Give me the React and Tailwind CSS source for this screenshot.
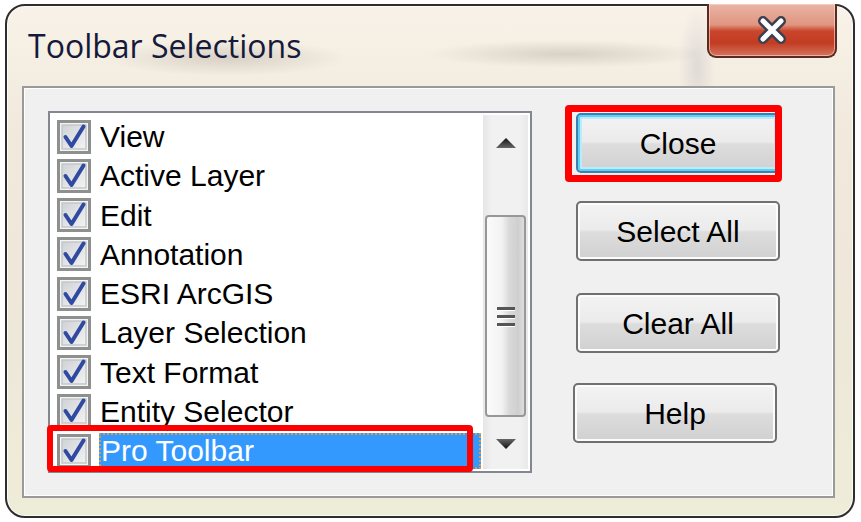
import React from 'react';

const items = [
  'View',
  'Active Layer',
  'Edit',
  'Annotation',
  'ESRI ArcGIS',
  'Layer Selection',
  'Text Format',
  'Entity Selector',
  'Pro Toolbar',
];

function CheckBox() {
  return (
    <svg width="34" height="34" viewBox="0 0 34 34" className="shrink-0">
      <defs>
        <linearGradient id="cbFill" x1="0" y1="0" x2="1" y2="1">
          <stop offset="0" stopColor="#cfd2d6" />
          <stop offset="1" stopColor="#f3f3f3" />
        </linearGradient>
      </defs>
      <rect x="1.5" y="1.5" width="31" height="31" fill="#f4f4f4" stroke="#8e8f8f" strokeWidth="3" />
      <rect x="5" y="5" width="24" height="24" fill="url(#cbFill)" stroke="#c4c6c9" strokeWidth="1.5" />
      <path d="M8.5 17 L14.5 26 L26.5 6.5" fill="none" stroke="#2f4aa0" strokeWidth="4" strokeLinecap="round" strokeLinejoin="round" />
    </svg>
  );
}

function Arrow({ down = false }) {
  return (
    <svg width="22" height="12" viewBox="0 0 22 12">
      <defs>
        <linearGradient id={down ? 'arD' : 'arU'} x1="0" y1="0" x2="0" y2="1">
          <stop offset="0" stopColor={down ? '#666' : '#111'} />
          <stop offset="1" stopColor={down ? '#111' : '#666'} />
        </linearGradient>
      </defs>
      <polygon points={down ? '1,1 21,1 11,11' : '11,1 21,11 1,11'} fill={`url(#${down ? 'arD' : 'arU'})`} />
    </svg>
  );
}

function Scrollbar() {
  return (
    <div className="w-[45px] my-[2px] mr-[2px] flex flex-col bg-[linear-gradient(90deg,#e6e6e6_0%,#f1f1f1_20%,#f1f1f1_80%,#e9e9e9_100%)]">
      <div className="h-[55px] flex items-center justify-center">
        <Arrow />
      </div>
      <div className="h-[45px]" />
      <div className="h-[202px] mx-[2px] rounded-[4px] border-2 border-[#979797] bg-[linear-gradient(90deg,#fbfbfb_0%,#f2f2f2_40%,#d9d9d9_60%,#cfcfcf_85%,#dedede_100%)] flex flex-col items-center justify-center gap-[5px]">
        <div className="w-[18px] h-[3px] bg-[#555] shadow-[0_1px_0_#fff]" />
        <div className="w-[18px] h-[3px] bg-[#555] shadow-[0_1px_0_#fff]" />
        <div className="w-[18px] h-[3px] bg-[#555] shadow-[0_1px_0_#fff]" />
      </div>
      <div className="flex-1 flex items-center justify-center pt-[2px]">
        <Arrow down />
      </div>
    </div>
  );
}

function Button({ label, focused = false, className = '' }) {
  return (
    <div
      className={`w-[204px] h-[60px] rounded-[5px] border-2 flex items-center justify-center text-[30px] text-black font-['Liberation_Sans',Arial,sans-serif] bg-[linear-gradient(180deg,#f3f3f3_0%,#ebebeb_48%,#dddddd_52%,#d0d0d0_100%)] ${
        focused
          ? 'border-[#3c7fb1] shadow-[inset_0_0_0_2px_#5fd0f5,inset_0_0_0_4px_#bfeaf9]'
          : 'border-[#707070] shadow-[inset_0_0_0_2px_#fcfcfc]'
      } ${className}`}
    >
      {label}
    </div>
  );
}

export default function App() {
  return (
    <div className="w-[861px] h-[522px] bg-white pt-[4px] pl-[5px] overflow-hidden">
      <div className="w-[850px] h-[514px] rounded-[20px] border-2 border-[#2e2e2e] shadow-[inset_0_0_0_1px_rgba(255,255,255,0.75)] flex flex-col bg-[radial-gradient(ellipse_120px_18px_at_220px_52px,rgba(150,140,130,0.3),transparent),radial-gradient(ellipse_140px_14px_at_560px_48px,rgba(150,140,130,0.3),transparent),radial-gradient(ellipse_18px_60px_at_690px_60px,rgba(160,160,180,0.25),transparent),linear-gradient(180deg,#f8f2e8_0%,#f1e9dc_25%,#eee8d9_70%,#eeedd8_100%)]">
        <div className="h-[80px] flex items-start justify-between pl-[21px] pr-[16px]">
          <div className="mt-[21px] text-[32px] leading-[38px] text-[#151a3a] font-['Open_Sans','Noto_Sans',sans-serif]">
            Toolbar Selections
          </div>
          <div className="-mt-[2px] w-[130px] h-[54px] rounded-b-[9px] border-2 border-t-0 border-[#5b2a22] shadow-[inset_0_0_0_1px_rgba(255,220,210,0.6)] bg-[linear-gradient(180deg,#eab4a6_0%,#e09580_40%,#c9452b_52%,#c23c22_75%,#d4745e_100%)] flex items-center justify-center">
            <svg width="34" height="30" viewBox="0 0 34 30">
              <path d="M8 6 L26 24 M26 6 L8 24" stroke="#3c3f4e" strokeWidth="10" strokeLinecap="round" />
              <path d="M8 6 L26 24 M26 6 L8 24" stroke="#ffffff" strokeWidth="5" strokeLinecap="round" />
            </svg>
          </div>
        </div>

        <div className="ml-[15px] mr-[18px] mb-[18px] flex-1 border-2 border-[#9a9a9a] shadow-[inset_0_0_0_1px_#ffffff] bg-[#f0f0f0] flex items-start pl-[24px] pt-[23px]">
          <div className="w-[484px] h-[362px] border-2 border-[#828790] bg-white flex">
            <div className="flex-1 pt-[4px] flex flex-col">
              {items.map((label, i) => {
                const selected = i === items.length - 1;
                return (
                  <div key={label} className="relative h-[39.25px] shrink-0 flex items-center pl-[7px]">
                    <CheckBox />
                    {selected ? (
                      <div className="ml-[8px] mr-[2px] flex-1 h-[36px] flex items-center bg-[#3399ff] border-2 border-dotted border-[#d99a4a] text-white text-[30px] font-['Liberation_Sans',Arial,sans-serif]">
                        {label}
                      </div>
                    ) : (
                      <span className="ml-[9px] text-[30px] text-black font-['Liberation_Sans',Arial,sans-serif]">
                        {label}
                      </span>
                    )}
                    {selected && (
                      <div className="absolute -left-[3px] -top-[6px] right-[10px] -bottom-[2px] border-[6px] border-[#ff0000] rounded-[4px]" />
                    )}
                  </div>
                );
              })}
            </div>
            <Scrollbar />
          </div>

          <div className="ml-[44px] pt-[2px] flex flex-col">
            <div className="relative">
              <Button label="Close" focused />
              <div className="absolute -left-[11px] -top-[8px] -right-[2px] -bottom-[9px] border-[7px] border-[#ff0000] rounded-[4px]" />
            </div>
            <Button label="Select All" className="mt-[28px]" />
            <Button label="Clear All" className="mt-[32px]" />
            <Button label="Help" className="mt-[30px] -ml-[3px]" />
          </div>
        </div>
      </div>
    </div>
  );
}
